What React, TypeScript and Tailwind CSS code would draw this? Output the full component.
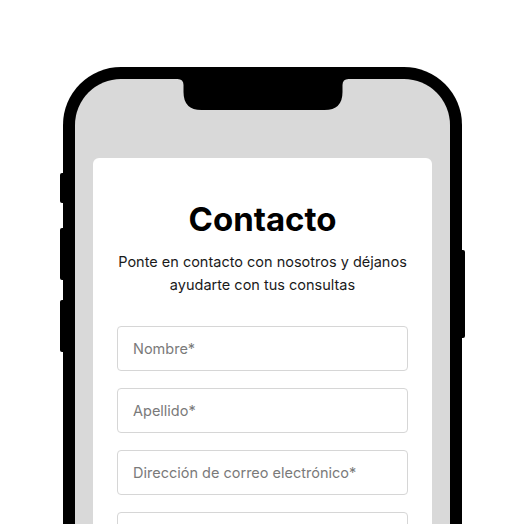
const fields = ['Nombre*', 'Apellido*', 'Dirección de correo electrónico*', 'Teléfono*']

function Notch() {
  return (
    <svg
      className="absolute left-1/2 top-0 -translate-x-1/2"
      width="171"
      height="31"
      viewBox="0 0 171 31"
    >
      <path d="M0 0 Q6 0 6 6 L6 13 Q6 31 24 31 L147 31 Q165 31 165 13 L165 6 Q165 0 171 0 Z" fill="#000" />
    </svg>
  )
}

export default function App() {
  return (
    <div
      className="h-[524px] w-[524px] overflow-hidden bg-white pt-[67px]"
      style={{ fontFamily: 'Inter, "Noto Sans", sans-serif' }}
    >
      <div className="relative ml-[63px] h-[600px] w-[399px] rounded-[58px] bg-black p-[12px]">
        {/* side buttons */}
        <div className="absolute left-[-3px] top-[106px] h-[30px] w-[3px] rounded-l-[2px] bg-black" />
        <div className="absolute left-[-3px] top-[161px] h-[52px] w-[3px] rounded-l-[2px] bg-black" />
        <div className="absolute left-[-3px] top-[233px] h-[52px] w-[3px] rounded-l-[2px] bg-black" />
        <div className="absolute right-[-3px] top-[183px] h-[88px] w-[3px] rounded-r-[2px] bg-black" />

        <div className="relative h-full rounded-[46px] bg-[#d9d9d9] px-[18px] pt-[79px]">
          <Notch />
          <div className="flex h-full flex-col items-center rounded-[6px] bg-white px-[24px] pt-[42px] text-center">
            <h1 className="text-[33px] font-bold leading-[38px] text-black">Contacto</h1>
            <p className="mt-[12px] whitespace-nowrap text-[14.5px] leading-[23px] text-[#1a1a1a]">
              Ponte en contacto con nosotros y déjanos
              <br />
              ayudarte con tus consultas
            </p>
            <div className="mt-[30px] flex w-full flex-col gap-[17px]">
              {fields.map((f) => (
                <input
                  key={f}
                  placeholder={f}
                  className="h-[45px] w-full rounded-[4px] border border-[#d6d6d6] px-[15px] text-[14.5px] text-black outline-none placeholder:text-[#7a7a7a]"
                />
              ))}
            </div>
          </div>
        </div>
      </div>
    </div>
  )
}
